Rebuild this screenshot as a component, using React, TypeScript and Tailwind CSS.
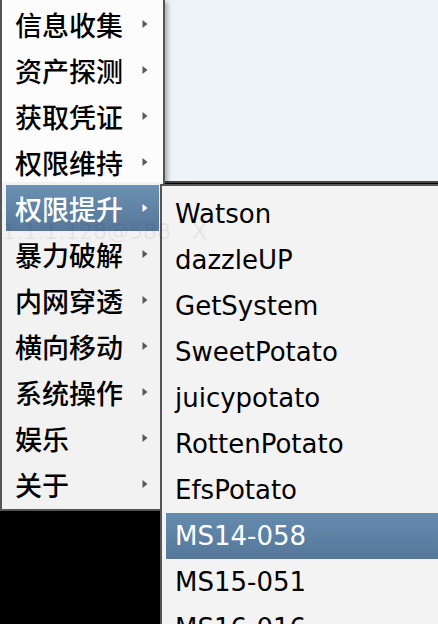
import React from "react";

const leftItems = [
  "信息收集",
  "资产探测",
  "获取凭证",
  "权限维持",
  "权限提升",
  "暴力破解",
  "内网穿透",
  "横向移动",
  "系统操作",
  "娱乐",
  "关于",
];

const subItems = [
  "Watson",
  "dazzleUP",
  "GetSystem",
  "SweetPotato",
  "juicypotato",
  "RottenPotato",
  "EfsPotato",
  "MS14-058",
  "MS15-051",
  "MS16-016",
];

function Arrow({ active }: { active: boolean }) {
  return (
    <svg width="6" height="10" viewBox="0 0 6 10" className="shrink-0">
      <path d="M0.5 1 L5.5 5 L0.5 9 Z" fill={active ? "#ffffff" : "#5a5a5a"} />
    </svg>
  );
}

export default function App() {
  return (
    <div className="relative w-[438px] h-[624px] overflow-hidden bg-black">
      {/* underlying window */}
      <div className="h-[183px] w-full bg-[#eef2f9] border-b-2 border-[#444]" />

      {/* main menu */}
      <div className="absolute left-0 top-0 z-10 w-[165px] h-[511px] flex flex-col border-l-2 border-r-2 border-b-2 border-[#555] bg-[linear-gradient(to_bottom,#fcfcfd_0px,#fcfcfd_182px,#f2f2f2_182px,#f2f2f2_100%)] pt-[1px] px-[4px] shadow-[3px_2px_4px_rgba(0,0,0,0.25)]">
        {leftItems.map((t) => {
          const active = t === "权限提升";
          return (
            <div
              key={t}
              className={
                "h-[46px] shrink-0 flex items-center justify-between pl-[9px] pr-[11px] text-[27px] font-medium leading-none " +
                (active
                  ? "bg-[linear-gradient(to_bottom,#6c90b2,#55789a)] text-white"
                  : "text-black")
              }
              style={{ fontFamily: '"Noto Sans CJK SC", "Noto Sans", sans-serif' }}
            >
              <span>{t}</span>
              <Arrow active={active} />
            </div>
          );
        })}
      </div>

      {/* submenu */}
      <div className="absolute left-[160px] top-[184px] z-20 w-[290px] h-[460px] flex flex-col border-l-2 border-t-2 border-[#555] bg-[#f3f3f3] pt-[5px] pl-[4px] pr-[2px]">
        {subItems.map((t) => {
          const active = t === "MS14-058";
          return (
            <div
              key={t}
              className={
                "h-[46px] shrink-0 flex items-center pl-[9px] text-[26px] leading-none " +
                (active
                  ? "bg-[linear-gradient(to_bottom,#648bae,#55789a)] text-white"
                  : "text-black")
              }
              style={{ fontFamily: '"DejaVu Sans", "Liberation Sans", sans-serif' }}
            >
              {t}
            </div>
          );
        })}
      </div>

      {/* faint ghost of the field behind the translucent menus */}
      <div
        aria-hidden="true"
        className="absolute left-[2px] top-[221px] z-30 text-[22px] leading-none text-[rgba(0,0,0,0.07)] whitespace-pre pointer-events-none"
        style={{ fontFamily: '"DejaVu Sans", sans-serif' }}
      >
        {"1.1.1.128@588   X"}
      </div>
    </div>
  );
}
